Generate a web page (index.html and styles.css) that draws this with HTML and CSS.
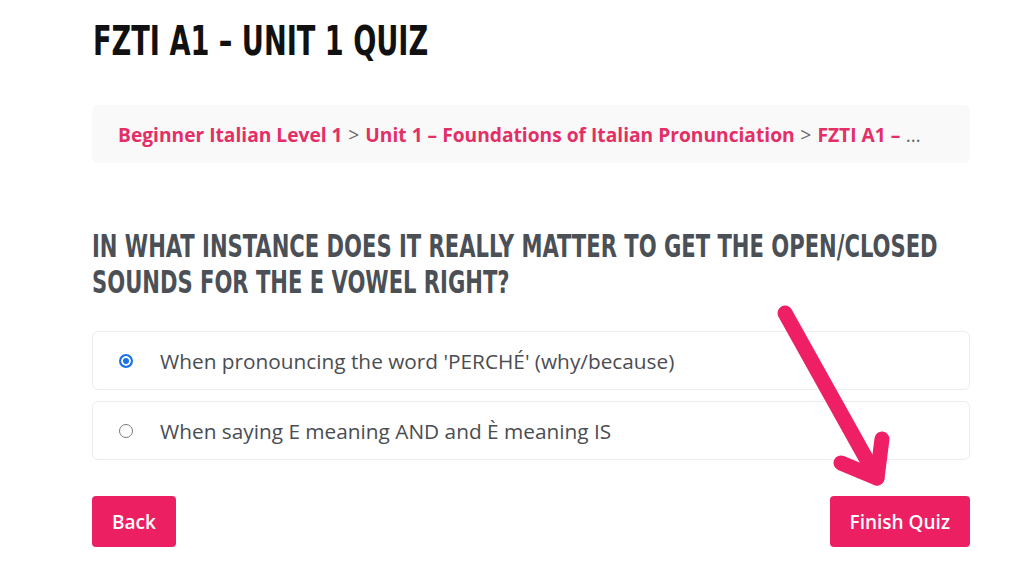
FILE: index.html
```html
<!DOCTYPE html>
<html>
<head>
<meta charset="utf-8">
<link rel="stylesheet" href="styles.css">
</head>
<body>
<div class="page">
  <h1 class="title"><span class="title-text">FZTI A1 – UNIT 1 QUIZ</span></h1>
  <nav class="crumbs">
    <a href="#">Beginner Italian Level 1</a><span class="sep"> &gt; </span><a href="#">Unit 1 – Foundations of Italian Pronunciation</a><span class="sep"> &gt; </span><a href="#">FZTI A1 –</a><span class="sep"> …</span>
  </nav>
  <h2 class="question"><span class="question-text">IN WHAT INSTANCE DOES IT REALLY MATTER TO GET THE OPEN/CLOSED SOUNDS FOR THE E VOWEL RIGHT?</span></h2>
  <div class="options">
    <label class="option"><span class="radio checked"></span><span class="opt-text">When pronouncing the word 'PERCHÉ' (why/because)</span></label>
    <label class="option"><span class="radio"></span><span class="opt-text">When saying E meaning AND and È meaning IS</span></label>
  </div>
  <div class="actions">
    <button class="btn">Back</button>
    <button class="btn">Finish Quiz</button>
  </div>
</div>
<svg class="arrow" width="1024" height="576" viewBox="0 0 1024 576">
  <g fill="none" stroke="#ee1f64" stroke-width="15" stroke-linecap="round" stroke-linejoin="round">
    <path d="M785 313 L877 478"/>
    <path d="M841 463 L877 478 L882 439"/>
  </g>
</svg>
</body>
</html>
```
FILE: styles.css
```css
html, body {
  margin: 0;
  padding: 0;
  background: #ffffff;
}
body {
  font-family: "Open Sans", "Noto Sans", sans-serif;
  width: 1024px;
  height: 576px;
  overflow: hidden;
  position: relative;
}
.page {
  width: 878px;
  padding: 17px 0 0 92px;
}
.title {
  margin: 0 0 0 1px;
  height: 48px;
  font-family: "DejaVu Sans Condensed", "DejaVu Sans", sans-serif;
  font-weight: 700;
  font-size: 41px;
  line-height: 48px;
  color: #111111;
  white-space: nowrap;
}
.title-text {
  display: inline-block;
  transform: scaleX(0.737);
  transform-origin: left center;
}
.crumbs {
  margin-top: 40px;
  height: 58px;
  box-sizing: border-box;
  background: #f9f9f9;
  border-radius: 6px;
  padding: 0 26px;
  display: flex;
  align-items: center;
  font-size: 19.2px;
  font-weight: 700;
  white-space: nowrap;
}
.crumbs a {
  color: #e42e66;
  text-decoration: none;
}
.crumbs .sep {
  color: #6b6b6b;
  font-weight: 400;
  white-space: pre;
  letter-spacing: 0.6px;
}
.question {
  margin: 65px 0 0 0;
  height: 72px;
  font-family: "DejaVu Sans Condensed", "DejaVu Sans", sans-serif;
  font-weight: 700;
  font-size: 32px;
  line-height: 36px;
  color: #4b5056;
}
.question-text {
  display: block;
  width: 1197px;
  transform: scaleX(0.733);
  transform-origin: left top;
}
.options {
  margin-top: 31px;
  display: flex;
  flex-direction: column;
  gap: 11px;
}
.option {
  height: 59px;
  box-sizing: border-box;
  border: 1px solid #ececec;
  border-radius: 6px;
  display: flex;
  align-items: center;
  padding-left: 26px;
  gap: 27px;
  font-size: 20.8px;
  color: #4a4d52;
}
.radio {
  width: 14px;
  height: 14px;
  border-radius: 50%;
  border: 1px solid #7a7a7a;
  box-sizing: border-box;
  background: #fff;
  flex: none;
}
.radio.checked {
  border: 2px solid #1a73e8;
  box-shadow: inset 0 0 0 2px #fff;
  background: #1a73e8;
}
.actions {
  margin-top: 36px;
  display: flex;
  justify-content: space-between;
}
.btn {
  height: 51px;
  border: none;
  border-radius: 4px;
  background: #ec1f63;
  color: #ffffff;
  font-family: "Open Sans", "Noto Sans", sans-serif;
  font-weight: 600;
  font-size: 19px;
  padding: 0 20px;
}
.arrow {
  position: absolute;
  left: 0;
  top: 0;
  pointer-events: none;
}
```
